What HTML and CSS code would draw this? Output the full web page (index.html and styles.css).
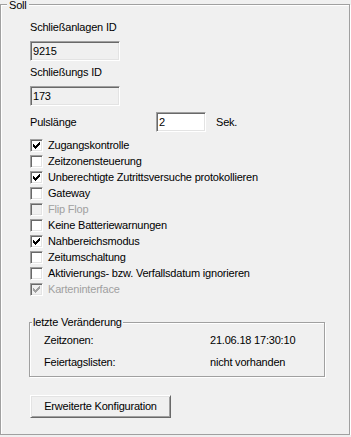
FILE: index.html
```html
<!DOCTYPE html>
<html lang="de">
<head>
<meta charset="utf-8">
<title>Soll</title>
<link rel="stylesheet" href="styles.css">
</head>
<body>
<div class="group outer">
  <span class="group-title outer-title">Soll</span>

  <div class="label first-label">Schließanlagen ID</div>
  <div class="tb readonly id-box">9215</div>

  <div class="label second-label">Schließungs ID</div>
  <div class="tb readonly id-box id-box2">173</div>

  <div class="puls-row">
    <span class="puls-label">Pulslänge</span>
    <div class="tb puls-box">2</div>
    <span class="puls-unit">Sek.</span>
  </div>

  <ul class="checks">
    <li class="check-row"><span class="cb"><svg viewBox="0 0 7 7" width="7" height="7"><path d="M0 2h1v1h1v1h1v-1h1v-1h1v-1h1v-1h1v3h-1v1h-1v1h-1v1h-1v1h-1v-1h-1v-1h-1z"/></svg></span>Zugangskontrolle</li>
    <li class="check-row"><span class="cb"></span>Zeitzonensteuerung</li>
    <li class="check-row"><span class="cb"><svg viewBox="0 0 7 7" width="7" height="7"><path d="M0 2h1v1h1v1h1v-1h1v-1h1v-1h1v-1h1v3h-1v1h-1v1h-1v1h-1v1h-1v-1h-1v-1h-1z"/></svg></span>Unberechtigte Zutrittsversuche protokollieren</li>
    <li class="check-row"><span class="cb"></span>Gateway</li>
    <li class="check-row disabled"><span class="cb"></span>Flip Flop</li>
    <li class="check-row"><span class="cb"></span>Keine Batteriewarnungen</li>
    <li class="check-row"><span class="cb"><svg viewBox="0 0 7 7" width="7" height="7"><path d="M0 2h1v1h1v1h1v-1h1v-1h1v-1h1v-1h1v3h-1v1h-1v1h-1v1h-1v1h-1v-1h-1v-1h-1z"/></svg></span>Nahbereichsmodus</li>
    <li class="check-row"><span class="cb"></span>Zeitumschaltung</li>
    <li class="check-row"><span class="cb"></span>Aktivierungs- bzw. Verfallsdatum ignorieren</li>
    <li class="check-row disabled"><span class="cb"><svg viewBox="0 0 7 7" width="7" height="7"><path d="M0 2h1v1h1v1h1v-1h1v-1h1v-1h1v-1h1v3h-1v1h-1v1h-1v1h-1v1h-1v-1h-1v-1h-1z"/></svg></span>Karteninterface</li>
  </ul>

  <div class="group inner">
    <span class="group-title inner-title">letzte Veränderung</span>
    <div class="info-grid">
      <span>Zeitzonen:</span><span>21.06.18 17:30:10</span>
      <span>Feiertagslisten:</span><span>nicht vorhanden</span>
    </div>
  </div>

  <button class="btn" type="button">Erweiterte Konfiguration</button>
</div>
</body>
</html>
```
FILE: styles.css
```css
* { box-sizing: border-box; }

html, body {
  margin: 0;
  padding: 0;
  background: #f0f0f0;
}

body {
  font-family: "Liberation Sans", Arial, sans-serif;
  font-size: 11px;
  line-height: 13px;
  letter-spacing: -0.2px;
  color: #000;
}

.group {
  position: relative;
  border: 1px solid #a0a0a0;
  box-shadow: 1px 1px 0 #fff, inset 1px 1px 0 #fff;
}

.group-title {
  position: absolute;
  background: #f0f0f0;
  line-height: 13px;
  white-space: nowrap;
}

.outer {
  margin-top: 4px;
  width: 350px;
  height: 431px;
  padding: 0 0 0 29px;
  display: flex;
  flex-direction: column;
  align-items: flex-start;
}

.outer-title {
  top: -5px;
  left: 6px;
  padding: 0 2px;
  line-height: 11px;
}

.label {
  height: 13px;
}

.first-label { margin-top: 16px; }
.second-label { margin-top: 5px; }

.tb {
  height: 20px;
  border: 1px solid;
  border-color: #a0a0a0 #fff #fff #a0a0a0;
  box-shadow: inset 1px 1px 0 #696969, inset -1px -1px 0 #e3e3e3;
  padding: 3px 0 0 2px;
  line-height: 13px;
  background: #fff;
}

.tb.readonly { background: #f0f0f0; }

.id-box {
  width: 90px;
  margin-top: 7px;
}

.id-box2 { margin-top: 7px; }

.puls-row {
  display: flex;
  align-items: center;
  margin-top: 6px;
  height: 20px;
}

.puls-label { width: 126px; }

.puls-box { width: 50px; }

.puls-unit { margin-left: 10px; }

.checks {
  list-style: none;
  margin: 5px 0 0;
  padding: 0;
}

.check-row {
  display: flex;
  align-items: center;
  height: 16px;
}

.cb {
  width: 13px;
  height: 13px;
  margin-right: 5px;
  flex: none;
  border: 1px solid;
  border-color: #a0a0a0 #fff #fff #a0a0a0;
  box-shadow: inset 1px 1px 0 #696969, inset -1px -1px 0 #e3e3e3;
  background: #fff;
  padding: 2px 0 0 2px;
}

.cb svg {
  display: block;
  fill: #000;
  shape-rendering: crispEdges;
}

.check-row.disabled { color: #a0a0a0; }
.check-row.disabled .cb { background: #f0f0f0; }
.check-row.disabled .cb svg { fill: #a0a0a0; }

.inner {
  margin-top: 25px;
  margin-left: -1px;
  width: 296px;
  height: 55px;
  padding: 11px 0 0 14px;
}

.inner-title {
  top: -7px;
  left: 2px;
  padding: 0 1px;
}

.info-grid {
  display: grid;
  grid-template-columns: 166px auto;
  row-gap: 9px;
}

.btn {
  margin-top: 18px;
  width: 141px;
  height: 23px;
  padding: 0;
  font: inherit;
  letter-spacing: inherit;
  color: #000;
  background: #f0f0f0;
  border: 1px solid;
  border-color: #fff #696969 #696969 #fff;
  box-shadow: inset 1px 1px 0 #e3e3e3, inset -1px -1px 0 #a0a0a0;
  border-radius: 0;
}
```
